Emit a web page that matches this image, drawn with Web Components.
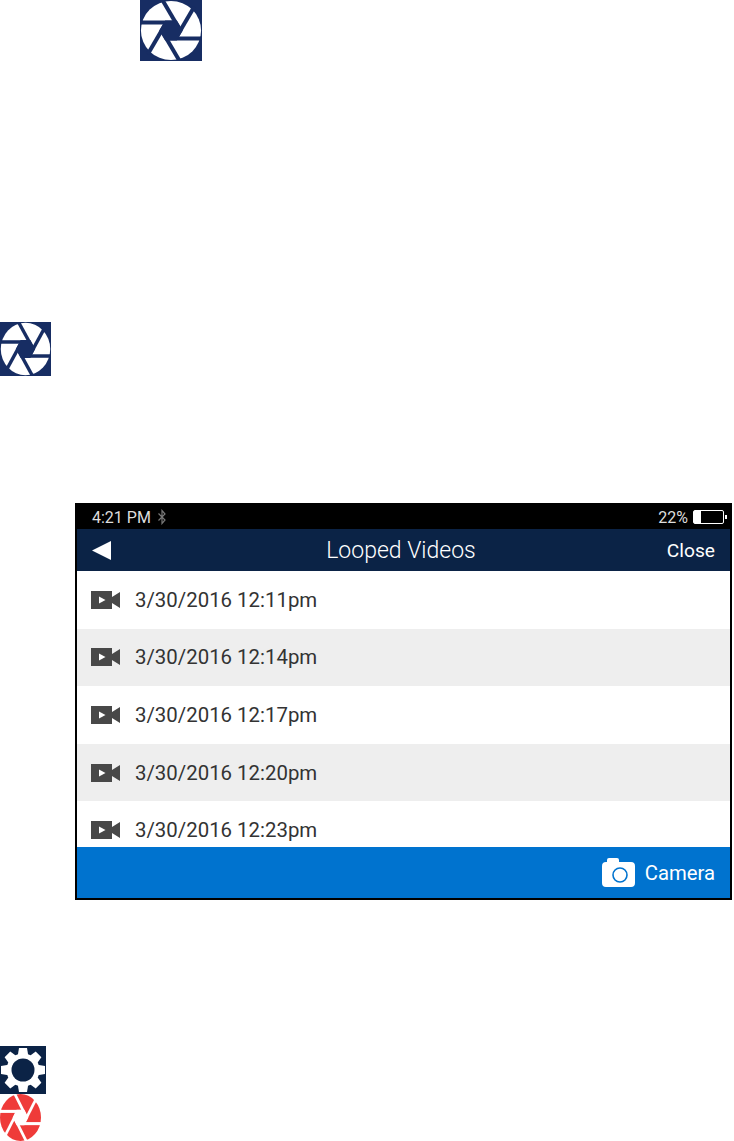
<!DOCTYPE html>
<html>
<head>
<meta charset="utf-8">
<title>Looped Videos</title>
<style>
    body { margin: 0; background: #fff; font-family: Roboto, sans-serif; }
    .doc { display: flex; flex-direction: column; align-items: flex-start; height: 1141px; overflow: hidden; }
</style>
</head>
<body>
<div class="doc">
    <shutter-icon style="margin: 0 0 0 140px; width: 62px; height: 61px;"></shutter-icon>
    <shutter-icon style="margin-top: 261px; width: 51px; height: 54px;"></shutter-icon>
    <phone-screen style="margin: 127px 0 0 75px;">
        <video-row>3/30/2016 12:11pm</video-row>
        <video-row shade>3/30/2016 12:14pm</video-row>
        <video-row>3/30/2016 12:17pm</video-row>
        <video-row shade>3/30/2016 12:20pm</video-row>
        <video-row>3/30/2016 12:23pm</video-row>
    </phone-screen>
    <gear-icon style="margin-top: 146px;"></gear-icon>
    <shutter-icon red style="width: 41px; height: 47px;"></shutter-icon>
</div>

<script>
class ShutterIcon extends HTMLElement {

    constructor() {
        super();
        this.shadow = this.attachShadow({ mode: 'open' });
    }

    connectedCallback() {
        const red = this.hasAttribute('red');
        const back = red ? '#fff' : '#172d63';
        const fill = red ? '#ef3b39' : '#fff';
        const gap = 13;
        const hexR = 19;
        let blades = '';
        let hex = [];

        // six strokes tangent to the middle hexagon, one per blade
        for (let k = 0; k < 6; k++) {
            blades += `<line x1="-52" y1="${-gap}" x2="8" y2="${-gap}" stroke-width="6.5" transform="rotate(${k * 60})"/>`;
            const a = k * 60 * Math.PI / 180;
            hex.push((hexR * Math.cos(a)).toFixed(2) + ',' + (hexR * Math.sin(a)).toFixed(2));
        }

        this.shadow.innerHTML =
        /*html*/`
        <style>
            :host { display: block; flex: none; background: ${back}; }
            svg { display: block; width: 100%; height: 100%; }
        </style>
        <svg viewBox="-50 -50 100 100" preserveAspectRatio="none">
            <circle r="${red ? 50 : 48.5}" fill="${fill}"/>
            <g stroke="${back}" fill="none">${blades}</g>
            <polygon points="${hex.join(' ')}" fill="${back}"/>
        </svg>
        `;
    }
}

class GearIcon extends HTMLElement {

    constructor() {
        super();
        this.shadow = this.attachShadow({ mode: 'open' });
    }

    connectedCallback() {
        let teeth = '';
        for (let k = 0; k < 8; k++) {
            teeth += `<path d="M-5.5 -13L-4 -22H4L5.5 -13Z" transform="rotate(${k * 45})"/>`;
        }

        this.shadow.innerHTML =
        /*html*/`
        <style>
            :host { display: block; flex: none; width: 46px; height: 48px; background: #0b2346; }
            svg { display: block; width: 100%; height: 100%; }
        </style>
        <svg viewBox="-23 -24 46 48">
            <g fill="#fff">${teeth}<circle r="16.5"/></g>
            <circle r="11.5" fill="#0b2346"/>
        </svg>
        `;
    }
}

class VideoRow extends HTMLElement {

    constructor() {
        super();
        this.shadow = this.attachShadow({ mode: 'open' });
    }

    connectedCallback() {
        this.shadow.innerHTML =
        /*html*/`
        <style>
            :host { display: flex; flex: none; align-items: center; gap: 15px; height: 57.6px; padding-left: 14px; background: #fff; color: #333; font-size: 20.4px; }
            :host([shade]) { background: #eee; }
            svg { width: 29px; height: 18px; flex: none; }
        </style>
        <svg viewBox="0 0 29 18">
            <path d="M0 0H21V6L29 1V17L21 12V18H0Z" fill="#484848"/>
            <path d="M8 5.5L14.5 9L8 12.5Z" fill="#fff"/>
        </svg>
        <slot></slot>
        `;
    }
}

class PhoneScreen extends HTMLElement {

    constructor() {
        super();
        this.shadow = this.attachShadow({ mode: 'open' });
    }

    connectedCallback() {
        this.shadow.innerHTML =
        /*html*/`
        <style>
            :host { display: flex; flex-direction: column; flex: none; box-sizing: border-box; width: 657px; height: 397px; border: 2px solid #000; border-top: 0; background: #fff; font-family: Roboto, sans-serif; color: #fff; }
            .status { display: flex; align-items: center; height: 26px; padding: 2px 3px 0 15px; box-sizing: border-box; background: #000; color: #ddd; font-size: 16px; }
            .status .bt { margin-left: 7px; }
            .status .pct { margin-left: auto; margin-right: 5px; }
            .head { display: grid; grid-template-columns: 1fr auto 1fr; align-items: center; height: 42px; padding: 0 15px; background: #0b2346; }
            .head .title { font-size: 23px; font-weight: 300; margin-right: 5px; }
            .head .close { justify-self: end; font-size: 19.2px; }
            .list { flex: 1; min-height: 0; overflow: hidden; display: flex; flex-direction: column; }
            .foot { display: flex; align-items: center; justify-content: flex-end; gap: 10px; height: 51px; padding-right: 15px; background: #0073cf; font-size: 20.3px; }
            svg { display: block; }
        </style>
        <div class="status">
            <span>4:21 PM</span>
            <svg class="bt" width="8" height="16" viewBox="0 0 8 16" fill="none" stroke="#777" stroke-width="1.2"><path d="M0.5 4.5L7 11L4 14.5V1.5L7 5L0.5 11.5"/></svg>
            <span class="pct">22%</span>
            <svg width="34" height="14" viewBox="0 0 34 14"><rect x="0.5" y="0.5" width="30" height="13" rx="1.5" fill="#000" stroke="#fff"/><rect x="1" y="1" width="7" height="12" fill="#fff"/><rect x="32" y="5" width="2" height="4" fill="#fff"/></svg>
        </div>
        <div class="head">
            <svg width="19" height="19" viewBox="0 0 19 19"><path d="M0 9.5L19 0V19Z" fill="#fff"/></svg>
            <span class="title">Looped Videos</span>
            <span class="close">Close</span>
        </div>
        <div class="list"><slot></slot></div>
        <div class="foot">
            <svg width="33" height="29" viewBox="0 0 33 29">
                <path d="M5 4V2Q5 0 7 0H15Q17 0 17 2V4H29Q33 4 33 8V25Q33 29 29 29H4Q0 29 0 25V8Q0 4 4 4Z" fill="#fff"/>
                <circle cx="18" cy="17" r="7" fill="none" stroke="#0073cf" stroke-width="1.6"/>
            </svg>
            <span>Camera</span>
        </div>
        `;
    }
}

customElements.define('shutter-icon', ShutterIcon);
customElements.define('gear-icon', GearIcon);
customElements.define('video-row', VideoRow);
customElements.define('phone-screen', PhoneScreen);
</script>
</body>
</html>
